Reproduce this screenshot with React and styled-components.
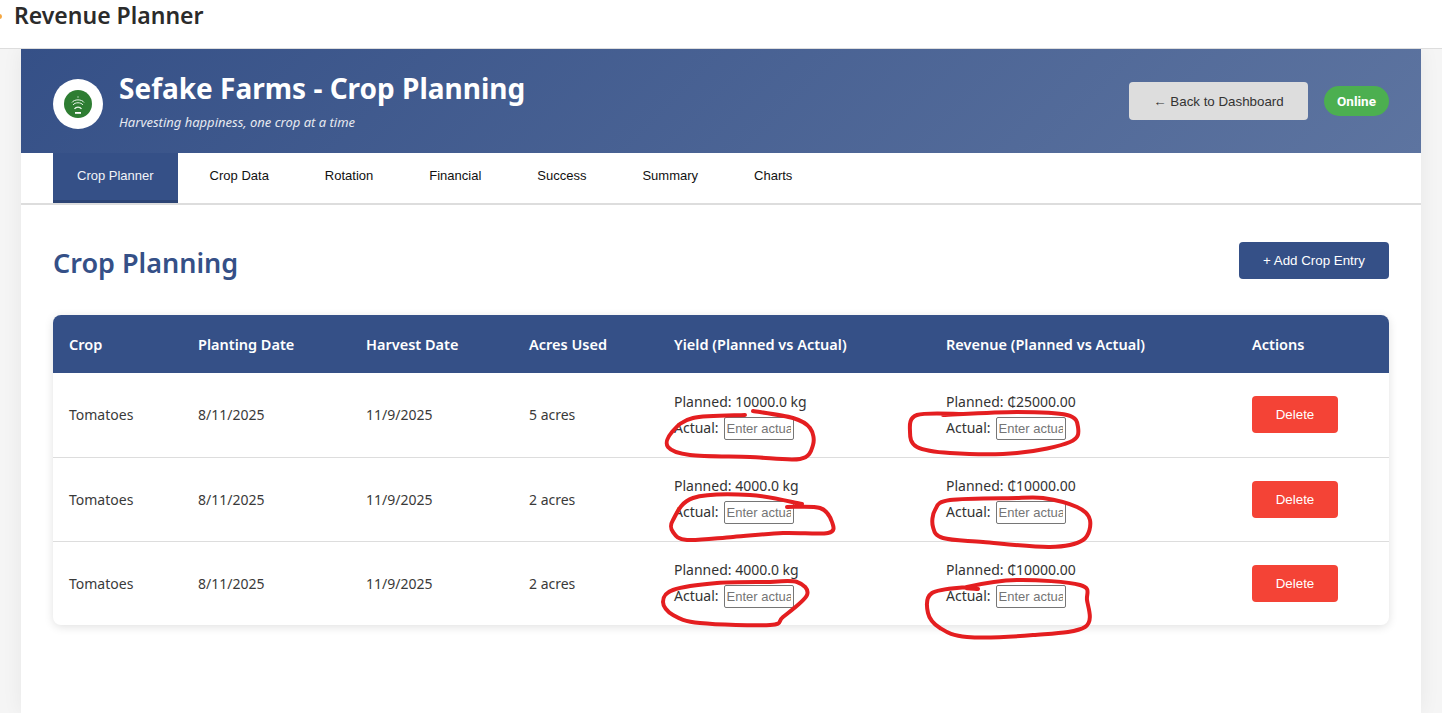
import React from 'react';
import styled, { createGlobalStyle } from 'styled-components';

const GlobalStyle = createGlobalStyle`
  html, body {
    margin: 0;
    padding: 0;
    height: 100%;
    overflow: hidden;
    background: #f5f5f5;
    font-family: 'Noto Sans', 'Open Sans', sans-serif;
    color: #333;
  }
  * { box-sizing: border-box; }
`;

const Page = styled.div`
  position: relative;
  width: 1442px;
  height: 713px;
  overflow: hidden;
`;

const TopBar = styled.div`
  position: relative;
  height: 49px;
  padding: 0 14px;
  background: #fff;
  border-bottom: 1px solid #ddd;
`;

const TopTitle = styled.h1`
  margin: 0;
  font-size: 23px;
  line-height: 30px;
  font-weight: 600;
  color: #2b2b2b;
`;

const OrangeDot = styled.span`
  position: absolute;
  left: -3px;
  top: 14px;
  width: 5px;
  height: 5px;
  border-radius: 50%;
  background: #f5a742;
`;

const Shell = styled.div`
  width: 1400px;
  height: 664px;
  margin: 0 auto;
  background: #fff;
  box-shadow: 0 0 20px rgba(0, 0, 0, 0.06);
`;

const Header = styled.header`
  display: flex;
  align-items: center;
  justify-content: space-between;
  height: 104px;
  padding: 0 32px;
  background: linear-gradient(135deg, #355087 0%, #5d74a0 100%);
`;

const Brand = styled.div`
  display: flex;
  align-items: center;
  gap: 16px;
  margin-top: 5px;
`;

const LogoWrap = styled.div`
  display: flex;
  align-items: center;
  justify-content: center;
  width: 50px;
  height: 50px;
  border-radius: 50%;
  background: #fff;
`;

const BrandTitle = styled.div`
  font-size: 28px;
  line-height: 36px;
  font-weight: 700;
  color: #fff;
  margin-top: -7px;
`;

const BrandTag = styled.div`
  margin-top: 7px;
  font-size: 13px;
  line-height: 18px;
  font-style: italic;
  color: #e6e9f0;
`;

const HeaderActions = styled.div`
  display: flex;
  align-items: center;
  gap: 16px;
`;

const Button = styled.button`
  height: ${(p) => p.$h || 37}px;
  width: ${(p) => p.$w}px;
  padding: 0;
  border: 0;
  border-radius: 4px;
  background: ${(p) => p.$bg};
  color: ${(p) => p.$fg || '#fff'};
  font-family: 'Liberation Sans', Arial, sans-serif;
  font-size: 13.33px;
`;

const StatusPill = styled.span`
  display: flex;
  align-items: center;
  justify-content: center;
  width: 65px;
  height: 30px;
  border-radius: 15px;
  background: #4caf50;
  color: #fff;
  font-family: 'Roboto', sans-serif;
  font-size: 13.5px;
  font-weight: 700;
`;

const Tabs = styled.nav`
  display: flex;
  gap: 8px;
  height: 52px;
  padding: 0 32px;
  border-bottom: 2px solid #ddd;
`;

const Tab = styled.div`
  display: flex;
  align-items: center;
  height: 50px;
  padding: 0 24px 3px;
  border-bottom: 3px solid ${(p) => (p.$active ? '#2c4474' : 'transparent')};
  background: ${(p) => (p.$active ? '#355087' : 'transparent')};
  color: ${(p) => (p.$active ? '#f2f4f8' : '#111')};
  font-family: 'Liberation Sans', Arial, sans-serif;
  font-size: 13px;
`;

const Content = styled.main`
  padding: 37px 32px 0;
`;

const TitleRow = styled.div`
  display: flex;
  align-items: center;
  justify-content: space-between;
  height: 37px;
  margin-bottom: 36px;
`;

const SectionTitle = styled.h2`
  margin: 0;
  font-size: 27px;
  font-weight: 600;
  color: #355087;
  position: relative;
  top: 2px;
`;

const TableCard = styled.div`
  border-radius: 8px;
  overflow: hidden;
  box-shadow: 0 2px 10px rgba(0, 0, 0, 0.12);
`;

const Table = styled.table`
  width: 100%;
  border-collapse: collapse;
  table-layout: fixed;
`;

const Th = styled.th`
  height: 58px;
  padding: 0 16px;
  background: #355087;
  color: #fff;
  text-align: left;
  font-size: 14.5px;
  font-weight: 600;
  width: ${(p) => p.$w}px;
`;

const Td = styled.td`
  height: 84px;
  padding: 0 16px;
  font-size: 14px;
  color: #3a3a3a;
  vertical-align: middle;
`;

const Row = styled.tr`
  border-bottom: 1px solid #ddd;
  &:last-child { border-bottom: 0; }
`;

const Metric = styled.div`
  font-size: 14px;
  line-height: 26px;
  color: #333;
  white-space: nowrap;
`;

const ActualInput = styled.input`
  width: 70px;
  height: 23px;
  margin-left: 5px;
  padding: 1px 2px;
  border: 1px solid #767676;
  border-radius: 2px;
  background: #fff;
  font-family: 'Liberation Sans', Arial, sans-serif;
  font-size: 13px;
  &::placeholder { color: #757575; }
`;

const Scribbles = styled.svg`
  position: absolute;
  left: 0;
  top: 0;
  pointer-events: none;
`;

const TABS = ['Crop Planner', 'Crop Data', 'Rotation', 'Financial', 'Success', 'Summary', 'Charts'];

const COLUMNS = [
  ['Crop', 129],
  ['Planting Date', 168],
  ['Harvest Date', 163],
  ['Acres Used', 145],
  ['Yield (Planned vs Actual)', 272],
  ['Revenue (Planned vs Actual)', 306],
  ['Actions', 153],
];

const ROWS = [
  { acres: '5 acres', yieldKg: '10000.0 kg', revenue: '₵25000.00' },
  { acres: '2 acres', yieldKg: '4000.0 kg', revenue: '₵10000.00' },
  { acres: '2 acres', yieldKg: '4000.0 kg', revenue: '₵10000.00' },
];

// hand drawn red circles on top of the screenshot, in page coordinates
const LOOPS = [
  [[745, 415], [693, 418], [672, 432], [668, 447], [690, 455], [750, 457], [800, 459], [813, 445], [810, 428], [793, 418], [753, 411]],
  [[963, 414], [917, 415], [910, 432], [917, 447], [950, 453], [1017, 453], [1070, 442], [1078, 427], [1067, 415], [1017, 412], [943, 415]],
  [[802, 504], [750, 495], [693, 498], [673, 520], [673, 532], [687, 540], [733, 537], [783, 533], [828, 533], [832, 522], [820, 508], [787, 507]],
  [[1017, 498], [950, 500], [935, 510], [933, 527], [943, 538], [983, 542], [1050, 547], [1083, 540], [1090, 520], [1077, 507], [1043, 498], [1017, 498]],
  [[768, 582], [717, 583], [673, 590], [663, 602], [673, 615], [700, 623], [770, 625], [783, 617], [807, 595], [797, 582], [768, 582]],
  [[978, 589], [967, 587], [1017, 580], [1080, 585], [1087, 600], [1085, 627], [1033, 635], [967, 637], [940, 628], [928, 613], [932, 593], [967, 587]],
];

const smoothPath = (pts) => {
  let d = `M${pts[0][0]} ${pts[0][1]}`;
  for (let i = 0; i < pts.length - 1; i++) {
    const p0 = pts[i - 1] || pts[i];
    const p1 = pts[i];
    const p2 = pts[i + 1];
    const p3 = pts[i + 2] || p2;
    const c1 = [p1[0] + (p2[0] - p0[0]) / 6, p1[1] + (p2[1] - p0[1]) / 6];
    const c2 = [p2[0] - (p3[0] - p1[0]) / 6, p2[1] - (p3[1] - p1[1]) / 6];
    d += ` C${c1[0]} ${c1[1]} ${c2[0]} ${c2[1]} ${p2[0]} ${p2[1]}`;
  }
  return d;
};

const Logo = () => (
  <svg width="28" height="28" viewBox="0 0 28 28">
    <circle cx="14" cy="14" r="14" fill="#2e7d32" />
    <g fill="none" stroke="#e8f3e8" strokeWidth="1">
      <path d="M8 12.5c2-3.5 10-3.5 12 0" />
      <path d="M9 15c2-3 8-3 10 0" />
      <path d="M10.5 19c1.5-2.5 5.500-2.500 7 0" strokeWidth="1.300" />
    </g>
    <circle cx="14" cy="7" r="0.700" fill="#cfe5cf" />
    <rect x="11" y="22" width="6" height="1.800" fill="#fff" />
  </svg>
);

const App = () => (
  <Page>
    <GlobalStyle />
    <TopBar>
      <OrangeDot />
      <TopTitle>Revenue Planner</TopTitle>
    </TopBar>
    <Shell>
      <Header>
        <Brand>
          <LogoWrap>
            <Logo />
          </LogoWrap>
          <div>
            <BrandTitle>Sefake Farms - Crop Planning</BrandTitle>
            <BrandTag>Harvesting happiness, one crop at a time</BrandTag>
          </div>
        </Brand>
        <HeaderActions>
          <Button $w={179} $h={38} $bg="#dddddd" $fg="#333">← Back to Dashboard</Button>
          <StatusPill>Online</StatusPill>
        </HeaderActions>
      </Header>
      <Tabs>
        {TABS.map((t, i) => (
          <Tab key={t} $active={i === 0}>{t}</Tab>
        ))}
      </Tabs>
      <Content>
        <TitleRow>
          <SectionTitle>Crop Planning</SectionTitle>
          <Button $w={150} $bg="#355087">+ Add Crop Entry</Button>
        </TitleRow>
        <TableCard>
          <Table>
            <thead>
              <tr>
                {COLUMNS.map(([label, w]) => (
                  <Th key={label} $w={w}>{label}</Th>
                ))}
              </tr>
            </thead>
            <tbody>
              {ROWS.map((r, i) => (
                <Row key={i}>
                  <Td>Tomatoes</Td>
                  <Td>8/11/2025</Td>
                  <Td>11/9/2025</Td>
                  <Td>{r.acres}</Td>
                  <Td>
                    <Metric>Planned: {r.yieldKg}</Metric>
                    <Metric>Actual:<ActualInput placeholder="Enter actual" /></Metric>
                  </Td>
                  <Td>
                    <Metric>Planned: {r.revenue}</Metric>
                    <Metric>Actual:<ActualInput placeholder="Enter actual" /></Metric>
                  </Td>
                  <Td>
                    <Button $w={86} $bg="#f44336">Delete</Button>
                  </Td>
                </Row>
              ))}
            </tbody>
          </Table>
        </TableCard>
      </Content>
    </Shell>
    <Scribbles width="1442" height="713" viewBox="0 0 1442 713" fill="none">
      {LOOPS.map((pts, i) => (
        <path key={i} d={smoothPath(pts)} stroke="#e41e20" strokeWidth="4" strokeLinecap="round" strokeLinejoin="round" />
      ))}
    </Scribbles>
  </Page>
);

export default App;
